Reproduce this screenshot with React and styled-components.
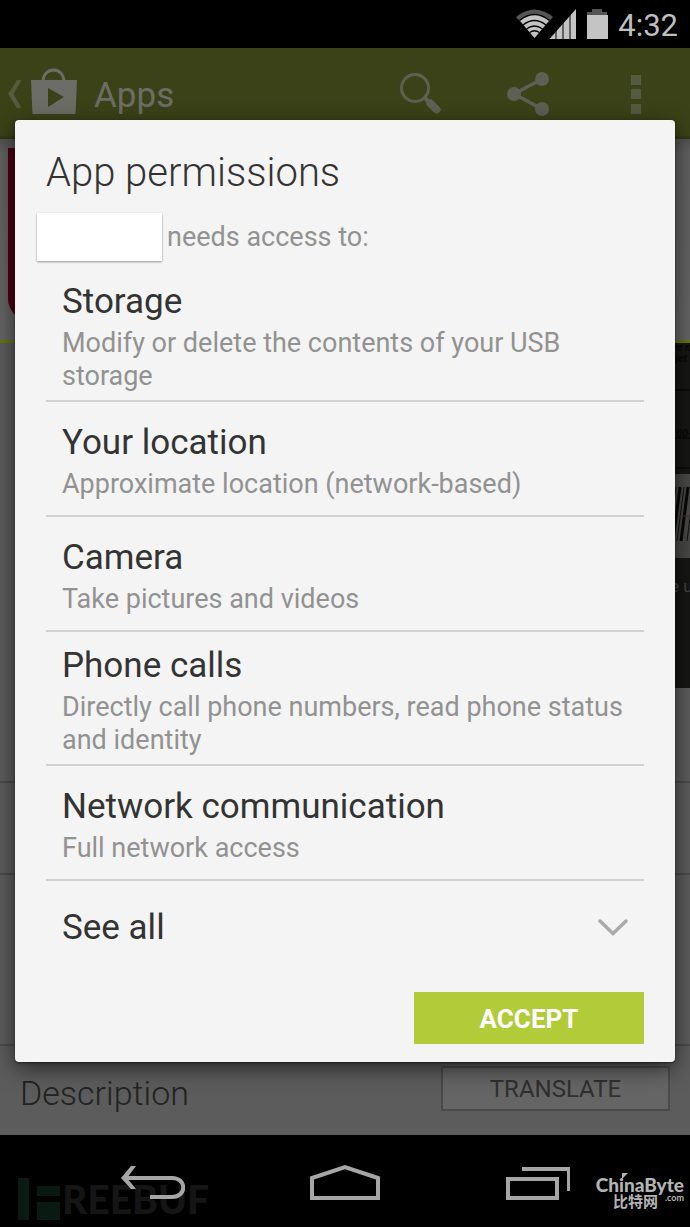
import styled, { createGlobalStyle } from 'styled-components'

const GlobalStyle = createGlobalStyle`
  * {
    box-sizing: border-box;
  }

  body {
    margin: 0;
    background: #000;
    font-family: Roboto, 'Noto Sans', sans-serif;
  }

  h1, h2, h3, p, ul {
    margin: 0;
    padding: 0;
    font-weight: 400;
  }

  button {
    margin: 0;
    padding: 0;
    border: 0;
    background: none;
    font-family: inherit;
    cursor: pointer;
  }

  svg {
    display: block;
    flex-shrink: 0;
  }
`

const Screen = styled.div`
  position: relative;
  display: flex;
  flex-direction: column;
  min-height: 100vh;
  overflow: hidden;
`

const StatusBar = styled.div`
  display: flex;
  align-items: center;
  justify-content: flex-end;
  height: 48px;
  padding-right: 12px;
  background: #000;
  color: #bfbfbf;
`

const Clock = styled.time`
  margin-left: 10px;
  padding-top: 4px;
  font-size: 31px;
  line-height: 40px;
`

const AppBar = styled.header`
  display: flex;
  align-items: center;
  justify-content: space-between;
  height: 91px;
  padding-top: 4px;
  border-bottom: 3px solid #333a10;
  background: #3c4217;
  color: #6d6d68;
`

const HomeLink = styled.a`
  display: flex;
  align-items: center;
  gap: 9px;
  padding-left: 8px;
  color: inherit;
  text-decoration: none;
`

const BarTitle = styled.span`
  padding: 4px 0 0 8px;
  font-size: 35px;
  line-height: 42px;
`

const Actions = styled.div`
  display: flex;
`

const Action = styled.button`
  display: flex;
  justify-content: center;
  width: 108px;
  color: #5f6054;
`

const Page = styled.main`
  display: flex;
  flex: 1;
  flex-direction: column;
  background: #5c5c5c;
`

const Hero = styled.section`
  height: 204px;
  padding: 9px 8px 0;
  border-bottom: 3px solid #637512;
  background: linear-gradient(#525252, #616161 14px, #646464);
`

const AppTile = styled.div`
  width: 174px;
  height: 174px;
  border-radius: 0 0 24px 24px;
  background: #4c0011;
`

const Gallery = styled.section`
  display: flex;
  justify-content: flex-end;
  height: 345px;
`

const Block = styled.section`
  height: ${props => props.$height}px;
  border-bottom: 2px solid #4b4b4b;
`

const Description = styled.section`
  display: flex;
  flex: 1;
  align-items: flex-start;
  justify-content: space-between;
  padding: 20px 20px 21px;
`

const DescriptionTitle = styled.h2`
  padding-top: 6px;
  color: #222;
  font-size: 34px;
  font-weight: 300;
  line-height: 42px;
`

const TranslateButton = styled.button`
  width: 229px;
  height: 45px;
  border: 2px solid #4a4a4a;
  background: #656565;
  color: #2f2f2f;
  font-size: 24px;
`

const NavBar = styled.nav`
  position: relative;
  display: grid;
  grid-template-columns: repeat(3, 1fr);
  height: 92px;
  padding: 0 57px;
  background: #000;
`

const NavButton = styled.button`
  position: relative;
  display: flex;
  align-items: center;
  justify-content: center;
  padding-top: 4px;
  color: #a6a6a6;
`

const FreebufMark = styled.div`
  position: absolute;
  left: 18px;
  bottom: 4px;
  display: flex;
  align-items: center;
  gap: 2px;
  color: #151515;
  font-family: Lato, sans-serif;
  font-size: 39px;
  font-weight: 900;
  line-height: 48px;
`

const ChinaByteMark = styled.div`
  position: absolute;
  right: 6px;
  bottom: 18px;
  display: flex;
  flex-direction: column;
  align-items: flex-end;
  color: #b4b4b4;
  font-family: Lato, 'Noto Sans CJK SC', sans-serif;
  font-weight: 900;
`

const MarkName = styled.div`
  position: relative;
  font-size: 19px;
  line-height: 18px;
`

const MarkFlag = styled.svg`
  position: absolute;
  top: -3px;
  left: 26px;
`

const MarkSub = styled.div`
  display: flex;
  gap: 7px;
  font-size: 15px;
  font-weight: 700;
  line-height: 15px;
`

const MarkDomain = styled.span`
  font-size: 9px;
  line-height: 8px;
`

const Overlay = styled.div`
  position: absolute;
  inset: 0;
  padding: 120px 15px 0;
`

const Dialog = styled.div`
  padding-bottom: 18px;
  border-radius: 4px;
  background: #f4f4f4;
  box-shadow: 0 1px 2px rgba(0, 0, 0, 0.5), 0 6px 22px rgba(0, 0, 0, 0.6);
`

const DialogTitle = styled.h1`
  padding: 29px 31px 16px;
  color: #333;
  font-size: 40px;
  font-weight: 300;
  line-height: 48px;
`

const Subtitle = styled.p`
  display: flex;
  align-items: center;
  gap: 5px;
  padding: 0 22px 7px;
  color: #929292;
  font-size: 27px;
  line-height: 33px;
`

const AppName = styled.span`
  width: 125px;
  height: 48px;
  background: #fff;
  box-shadow: 0 1px 2px rgba(0, 0, 0, 0.4);
`

const PermissionList = styled.ul`
  margin: 0 31px;
  list-style: none;
`

const Permission = styled.li`
  display: flex;
  flex-direction: column;
  justify-content: center;
  min-height: 115px;
  padding: 9px 16px 7px;
  border-bottom: 2px solid #d0d0d0;
`

const PermissionName = styled.h3`
  color: #333;
  font-size: 35px;
  line-height: 50px;
`

const PermissionDetail = styled.p`
  color: #929292;
  font-size: 27px;
  line-height: 33px;
`

const SeeAll = styled.button`
  display: flex;
  align-items: center;
  justify-content: space-between;
  width: calc(100% - 62px);
  height: 94px;
  margin: 0 31px;
  padding: 0 16px;
  color: #333;
  font-size: 35px;
  line-height: 50px;
`

const DialogActions = styled.div`
  display: flex;
  justify-content: flex-end;
  padding: 17px 31px 0;
`

const AcceptButton = styled.button`
  width: 230px;
  height: 52px;
  padding-top: 2px;
  background: #b2cb39;
  color: #fff;
  font-size: 26px;
  font-weight: 700;
`

const permissions = [
  { name: 'Storage', detail: 'Modify or delete the contents of your USB storage' },
  { name: 'Your location', detail: 'Approximate location (network-based)' },
  { name: 'Camera', detail: 'Take pictures and videos' },
  { name: 'Phone calls', detail: 'Directly call phone numbers, read phone status and identity' },
  { name: 'Network communication', detail: 'Full network access' },
]

const StatusIcons = () => (
  <svg width='92' height='34' viewBox='0 0 92 34' fill='#c4c4c4'>
    <path d='M0 10Q18.500-5 37 10L18.500 31Z' fill='#555' />
    <path d='M4 13.500Q18.500 2 33 13.500L18.500 31Z' />
    <path d='M3.500 13.500Q18.500 1.500 33.500 13.500M7 18Q18.500 9 30 18M10.500 22Q18.500 16 26.500 22M13.500 25.500Q18.500 22 23.500 25.500' fill='none' stroke='#000' strokeWidth='1.300' />
    <path d='M33.500 32L60 2V32Z' />
    <path d='M40 9V32M47 3V32M54 1V32' stroke='#000' strokeWidth='1' />
    <path d='M76 2h10v3h5v4H71V5h5z' fill='#555' />
    <path d='M71 8h21v24H71z' />
  </svg>
)

const UpChevron = () => (
  <svg width='14' height='28' viewBox='0 0 14 28'>
    <path d='M9 0h4.500L5.500 14l8 14H9L0 14z' fill='#555b3c' />
  </svg>
)

const PlayBag = () => (
  <svg width='46' height='52' viewBox='0 0 46 52'>
    <path d='M12 14C12-2 33-2 33 14' fill='none' stroke='#6d6d68' strokeWidth='3' />
    <path d='M0 12h46l-1.500 34h-43zM17 20v19l16-10z' fill='#6d6d68' fillRule='evenodd' />
  </svg>
)

const SearchIcon = () => (
  <svg width='44' height='44' viewBox='0 0 44 44' fill='none' stroke='currentColor'>
    <circle cx='17' cy='16' r='13.500' strokeWidth='3' />
    <path d='M26 25l5 5' strokeWidth='4' />
    <path d='M32.500 31.500l6 6' strokeWidth='8' strokeLinecap='round' />
  </svg>
)

const ShareIcon = () => (
  <svg width='44' height='44' viewBox='0 0 44 44' fill='currentColor'>
    <path d='M36 7L8 22l28 15' fill='none' stroke='currentColor' strokeWidth='3.500' />
    <circle cx='36' cy='7' r='7' />
    <circle cx='8' cy='22' r='7' />
    <circle cx='36' cy='37' r='7' />
  </svg>
)

const MoreIcon = () => (
  <svg width='10' height='44' viewBox='0 0 10 44' fill='#555b40'>
    <path d='M0 3h10v10H0zM0 17h10v10H0zM0 32h10v10H0z' />
  </svg>
)

const Screenshot = () => (
  <svg width='60' height='345' viewBox='0 0 60 345'>
    <rect width='60' height='345' fill='#161614' />
    <path d='M0 47h60M0 95h60M0 125h60' stroke='#0b0b0b' strokeWidth='2' />
    <g fill='#090909' fontSize='11' fontWeight='700' fontStyle='italic'>
      <text x='43' y='8'>re n</text>
      <text x='45' y='19'>jet</text>
      <text x='46' y='94'>00-</text>
    </g>
    <rect y='131' width='60' height='84' fill='#484846' />
    <path d='M50 144L43 198M58 144L51 198' stroke='#080808' strokeWidth='3' />
    <path d='M46 144L39 198M54 144L47 198M64 144L57 198' stroke='#111' strokeWidth='1' />
    <path d='M48 173h12' stroke='#4a2b2b' />
    <text x='40' y='249' fill='#454545' fontSize='17'>e u</text>
  </svg>
)

const ExpandIcon = () => (
  <svg width='30' height='18' viewBox='0 0 30 18'>
    <path d='M2 2l13 12.500L28 2' fill='none' stroke='#aaa' strokeWidth='3.500' strokeLinecap='round' />
  </svg>
)

const BackIcon = () => (
  <svg width='64' height='40' viewBox='0 0 64 40' fill='none' stroke='currentColor' strokeWidth='4'>
    <path d='M2 15H51C66 15 66 34 51 34H29' />
    <path d='M10 3h5L6 15l9 11h-5L0 15z' fill='currentColor' stroke='none' />
  </svg>
)

const HomeIcon = () => (
  <svg width='70' height='38' viewBox='0 0 70 38' fill='none' stroke='currentColor' strokeWidth='4'>
    <path d='M2 34V14L35 3l33 11v20z' />
  </svg>
)

const RecentIcon = () => (
  <svg width='66' height='38' viewBox='0 0 66 38' fill='none' stroke='currentColor' strokeWidth='4'>
    <path d='M4 15h49v19H4zM18 5h47v22' />
  </svg>
)

const FreebufBars = () => (
  <svg width='42' height='42' viewBox='0 0 42 42' fill='#081a12'>
    <path d='M0 0h11v42H0zM19 8h23v10H19zM19 24h23v18H19z' />
  </svg>
)

const App = () => {
  return (
    <>
      <GlobalStyle />
      <Screen>
        <StatusBar>
          <StatusIcons />
          <Clock>4:32</Clock>
        </StatusBar>
        <AppBar>
          <HomeLink href='#apps'>
            <UpChevron />
            <PlayBag />
            <BarTitle>Apps</BarTitle>
          </HomeLink>
          <Actions>
            <Action aria-label='Search'>
              <SearchIcon />
            </Action>
            <Action aria-label='Share'>
              <ShareIcon />
            </Action>
            <Action aria-label='More options'>
              <MoreIcon />
            </Action>
          </Actions>
        </AppBar>
        <Page>
          <Hero>
            <AppTile />
          </Hero>
          <Gallery>
            <Screenshot />
          </Gallery>
          <Block $height={95} />
          <Block $height={92} />
          <Block $height={171} />
          <Description>
            <DescriptionTitle>Description</DescriptionTitle>
            <TranslateButton>TRANSLATE</TranslateButton>
          </Description>
        </Page>
        <NavBar>
          <FreebufMark>
            <FreebufBars />
            REEBUF
          </FreebufMark>
          <NavButton aria-label='Back'>
            <BackIcon />
          </NavButton>
          <NavButton aria-label='Home'>
            <HomeIcon />
          </NavButton>
          <NavButton aria-label='Recent apps'>
            <RecentIcon />
          </NavButton>
          <ChinaByteMark>
            <MarkName>
              ChinaByte
              <MarkFlag width='6' height='6' viewBox='0 0 6 6'>
                <path d='M0 0h6L0 6z' fill='currentColor' />
              </MarkFlag>
            </MarkName>
            <MarkSub>
              比特网
              <MarkDomain>.com</MarkDomain>
            </MarkSub>
          </ChinaByteMark>
        </NavBar>
        <Overlay>
          <Dialog role='dialog' aria-labelledby='dialog-title'>
            <DialogTitle id='dialog-title'>App permissions</DialogTitle>
            <Subtitle>
              <AppName />
              needs access to:
            </Subtitle>
            <PermissionList>
              {permissions.map(({ name, detail }) => (
                <Permission key={name}>
                  <PermissionName>{name}</PermissionName>
                  <PermissionDetail>{detail}</PermissionDetail>
                </Permission>
              ))}
            </PermissionList>
            <SeeAll>
              See all
              <ExpandIcon />
            </SeeAll>
            <DialogActions>
              <AcceptButton>ACCEPT</AcceptButton>
            </DialogActions>
          </Dialog>
        </Overlay>
      </Screen>
    </>
  )
}

export default App
